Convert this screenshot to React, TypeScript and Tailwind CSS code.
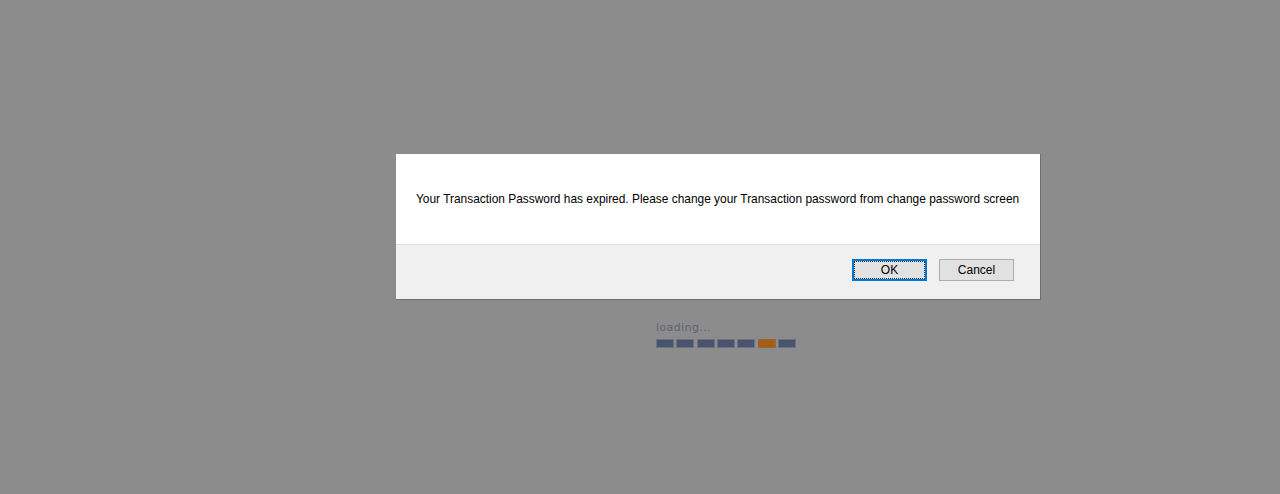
export default function App() {
  const blocks = [0, 1, 2, 3, 4, 5, 6];
  return (
    <div className="h-[494px] w-[1280px] overflow-hidden bg-[#8c8c8c] pt-[154px] font-['Liberation_Sans',Arial,sans-serif]">
      {/* Dialog */}
      <div className="ml-[396px] w-[645px] border-r border-b border-[#6f6f6f] bg-white">
        <div className="flex h-[90px] items-center pl-[20px] pt-[2px] text-[11.92px] text-black">
          Your Transaction Password has expired. Please change your Transaction password from change password screen
        </div>
        <div className="flex h-[55px] items-start justify-end gap-[12px] border-t border-[#dfdfdf] bg-[#f0f0f0] pr-[26px] pt-[14px]">
          <button className="flex h-[22px] w-[75px] items-center justify-center border-2 border-[#0078d7] bg-[#e1e1e1] p-0 text-[12px] text-black">
            <span className="flex h-full w-full items-center justify-center border border-dotted border-[#333]">OK</span>
          </button>
          <button className="flex h-[22px] w-[75px] items-center justify-center border border-[#adadad] bg-[#e1e1e1] text-[12px] text-black">
            Cancel
          </button>
        </div>
      </div>

      {/* Loading indicator */}
      <div className="ml-[656px] mt-[21px]">
        <div className="text-[11px] leading-[14px] tracking-[0.4px] text-[#5f6470] font-['DejaVu_Sans',sans-serif]">loading...</div>
        <div className="mt-[4px] flex gap-[2.33px]">
          {blocks.map((i) => (
            <div
              key={i}
              className={
                i === 5
                  ? 'h-[9px] w-[18px] border border-[#8a6a48] bg-[#a85d12]'
                  : 'h-[9px] w-[18px] border border-[#6b7283] bg-[#48546e]'
              }
            />
          ))}
        </div>
      </div>
    </div>
  );
}
